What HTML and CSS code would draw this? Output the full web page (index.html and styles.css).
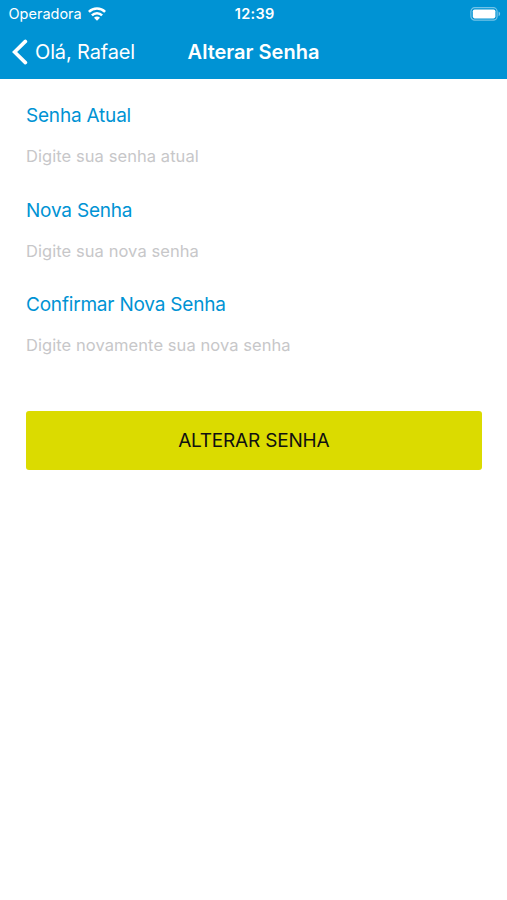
FILE: index.html
```html
<!DOCTYPE html>
<html lang="pt-BR">
<head>
    <meta charset="UTF-8">
    <meta name="viewport" content="width=device-width, initial-scale=1.0">
    <title>Alterar Senha</title>
    <link rel="stylesheet" href="styles.css">
</head>
<body>

<header class="header">
    <div class="status-bar">
        <div class="carrier">
            <span class="carrier-name">Operadora</span>
            <svg class="wifi" width="18" height="14" viewBox="0 0 18 14" fill="none" stroke="#fff" stroke-width="2.5">
                <path d="M.9 4.8a11.4 11.4 0 0 1 16.2 0"/>
                <path d="M3.9 8.4a7.1 7.1 0 0 1 10.2 0"/>
                <path d="M9 13.8l-3-3a4.2 4.2 0 0 1 6 0z" fill="#fff" stroke="none"/>
            </svg>
        </div>
        <span class="time">12:39</span>
        <svg class="battery" width="31" height="14" viewBox="0 0 31 14">
            <rect x="0.9" y="0.7" width="26.2" height="12.4" rx="3.8" fill="none" stroke="#fff" stroke-opacity="0.45" stroke-width="1.2"/>
            <rect x="2.8" y="2.4" width="22.6" height="9" rx="1.8" fill="#fff"/>
            <path d="M28.6 4.6c2 .8 2 3.8 0 4.6z" fill="#fff" fill-opacity="0.5"/>
        </svg>
    </div>
    <nav class="nav-bar">
        <a class="back" href="#">
            <svg class="chevron" width="16" height="26" viewBox="0 0 16 26" fill="none" stroke="#fff" stroke-width="3.6" stroke-linecap="round">
                <path d="M13.4 2.4L2.6 13l10.8 10.6"/>
            </svg>
            <span class="back-text">Olá, Rafael</span>
        </a>
        <h1 class="title">Alterar Senha</h1>
    </nav>
</header>

<form class="form">
    <div class="field">
        <label for="senha-atual">Senha Atual</label>
        <input type="password" id="senha-atual" placeholder="Digite sua senha atual">
    </div>
    <div class="field">
        <label for="nova-senha">Nova Senha</label>
        <input type="password" id="nova-senha" placeholder="Digite sua nova senha">
    </div>
    <div class="field">
        <label for="confirmar-senha">Confirmar Nova Senha</label>
        <input type="password" id="confirmar-senha" placeholder="Digite novamente sua nova senha">
    </div>
    <button type="submit">ALTERAR SENHA</button>
</form>

</body>
</html>
```
FILE: styles.css
```css
* {
    box-sizing: border-box;
}
body {
    font-family: Inter, "Liberation Sans", sans-serif;
    margin: 0;
    background-color: #fff;
}
.header {
    height: 79px;
    background-color: #0093d4;
    color: #fff;
}
.status-bar,
.nav-bar {
    display: grid;
    grid-template-columns: 1fr auto 1fr;
    align-items: center;
}
.status-bar {
    height: 27px;
    padding: 0 6px 0 8.5px;
    font-size: 14.5px;
}
.carrier {
    display: flex;
    align-items: center;
    gap: 6px;
}
.time {
    font-weight: 600;
    letter-spacing: 0.3px;
}
.battery {
    justify-self: end;
}
.nav-bar {
    height: 50px;
    padding: 0 12px;
}
.back {
    display: flex;
    align-items: center;
    gap: 7px;
    color: #fff;
    font-size: 20px;
    letter-spacing: -0.15px;
    text-decoration: none;
}
.title {
    margin: 0;
    font-size: 20px;
    font-weight: 600;
}
.form {
    padding: 24px 25.5px 24px 26px;
}
.field {
    height: 94.5px;
}
.field label {
    display: block;
    height: 26px;
    line-height: 26px;
    color: #0093d4;
    font-size: 19px;
    letter-spacing: -0.2px;
}
.field input {
    display: block;
    width: 100%;
    height: 30px;
    margin-top: 12px;
    padding: 0;
    border: none;
    outline: none;
    font-family: inherit;
    font-size: 16.5px;
    letter-spacing: 0.07px;
}
.field input::placeholder {
    color: #c7c7c9;
}
.form button {
    display: block;
    width: 100%;
    height: 58.5px;
    margin-top: 24.5px;
    background-color: #dbdb00;
    color: #111;
    border: none;
    border-radius: 3px;
    font-family: inherit;
    font-size: 19px;
    letter-spacing: -0.2px;
}
```
